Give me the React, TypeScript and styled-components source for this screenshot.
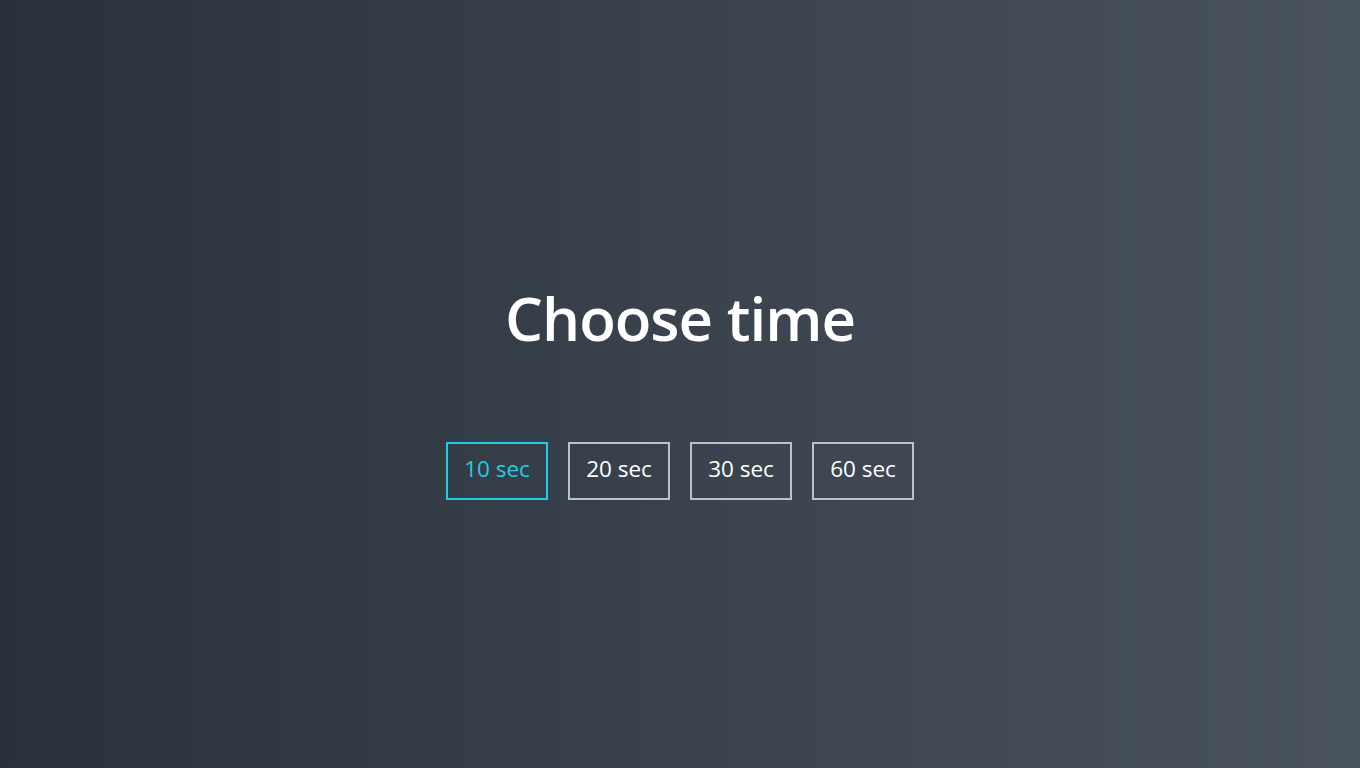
import React, { useState } from "react";
import styled, { createGlobalStyle } from "styled-components";

const Global = createGlobalStyle`
  html, body { margin: 0; padding: 0; height: 100%; }
  body { font-family: "Open Sans", "Noto Sans", sans-serif; }
  #root { height: 100%; }
`;

const Screen = styled.main`
  height: 100vh;
  width: 100%;
  box-sizing: border-box;
  padding-top: 14px;
  background: linear-gradient(90deg, #2a313b 0%, #49535f 100%);
  display: flex;
  flex-direction: column;
  align-items: center;
  justify-content: center;
  color: #fff;
`;

const Title = styled.h1`
  margin: 0 0 88px;
  font-size: 60px;
  font-weight: 600;
  line-height: 72px;
  letter-spacing: -1px;
`;

const Options = styled.ul`
  list-style: none;
  margin: 0;
  padding: 0;
  display: flex;
  gap: 20px;
`;

const Option = styled.button<{ $active: boolean }>`
  background: transparent;
  font-family: inherit;
  font-size: 22.5px;
  line-height: 28px;
  padding: 0 0 4px;
  width: 102px;
  height: 58px;
  box-sizing: border-box;
  border: 2px solid ${(p) => (p.$active ? "#20d0e0" : "#bfc1c4")};
  color: ${(p) => (p.$active ? "#20d0e0" : "#ffffff")};
  cursor: pointer;
`;

const times = [10, 20, 30, 60];

export default function App() {
  const [sel, setSel] = useState(10);
  return (
    <>
      <Global />
      <Screen>
        <Title>Choose time</Title>
        <Options>
          {times.map((t) => (
            <li key={t}>
              <Option $active={sel === t} onClick={() => setSel(t)}>
                {t} sec
              </Option>
            </li>
          ))}
        </Options>
      </Screen>
    </>
  );
}
